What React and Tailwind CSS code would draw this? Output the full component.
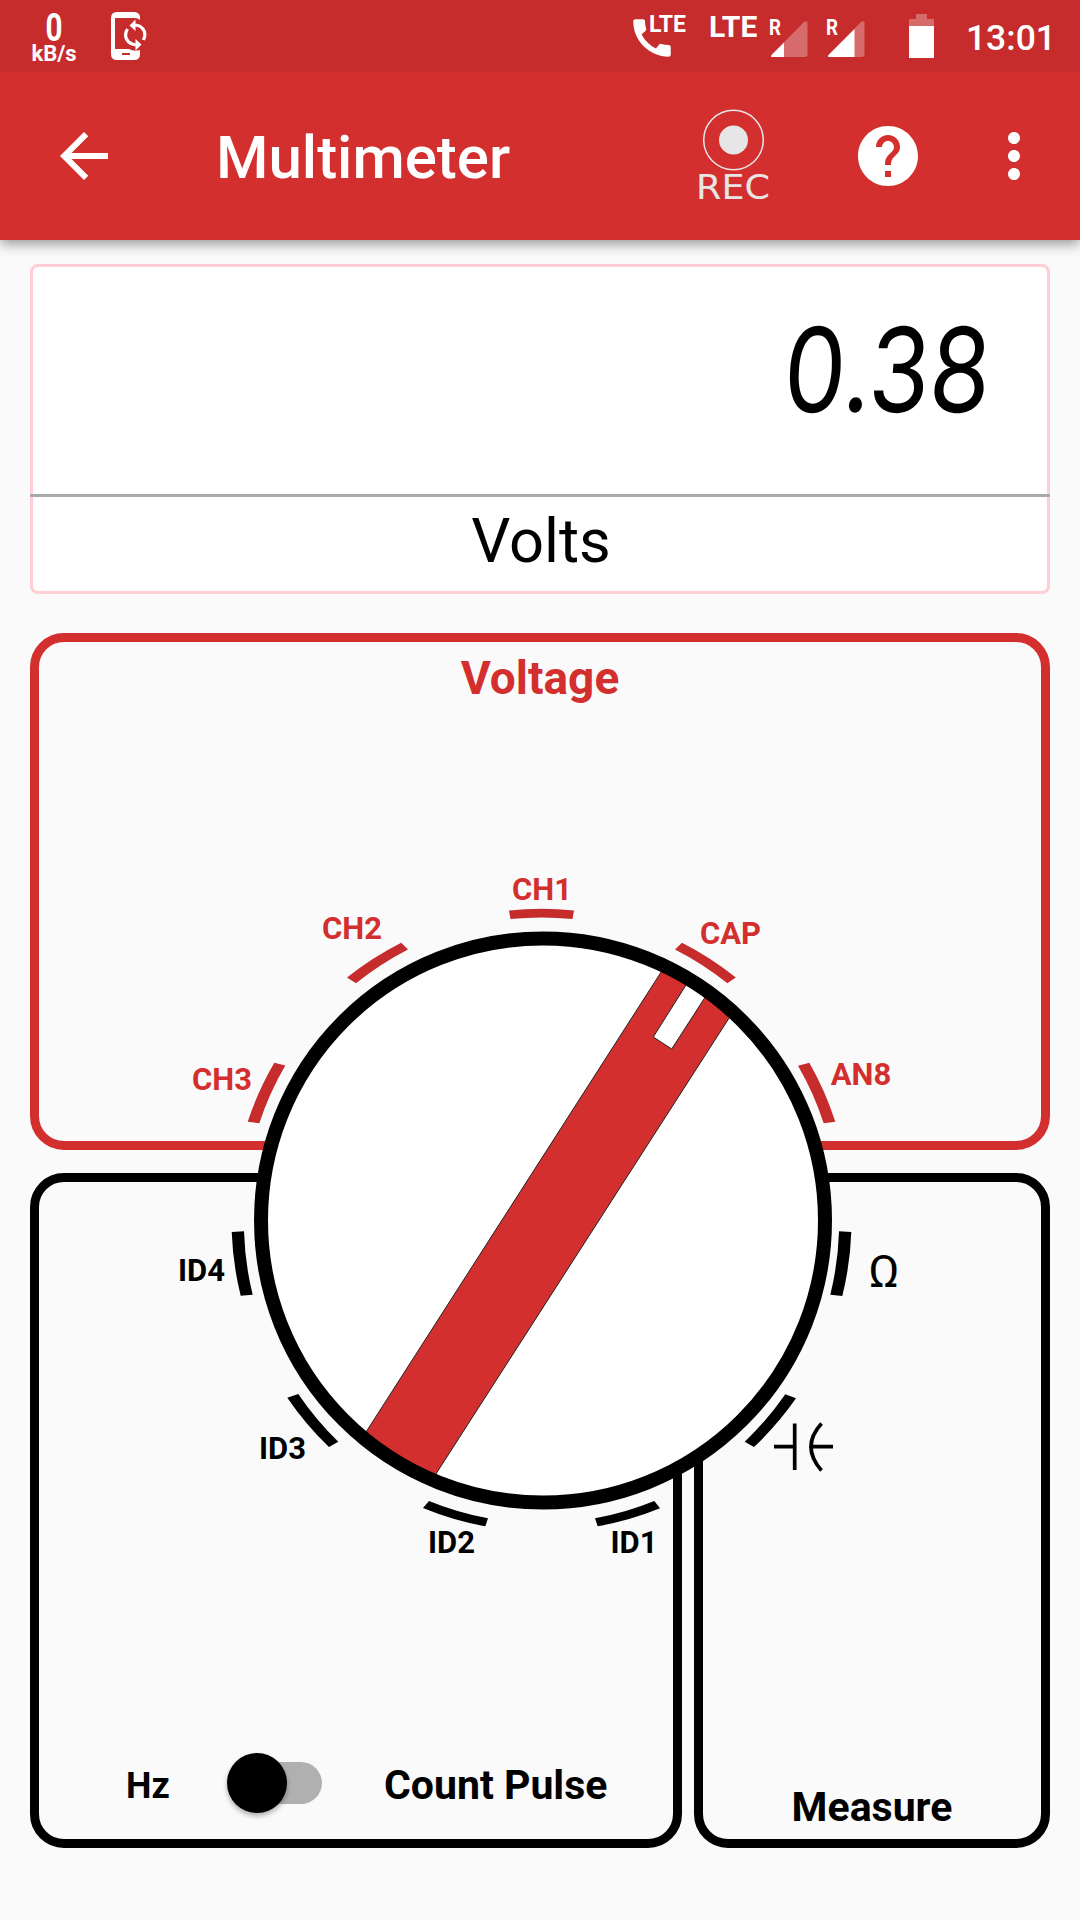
import { MdArrowBack, MdCall, MdHelp, MdMoreVert } from "react-icons/md";

const RED = "#d32f2f";

function PhoneSync() {
  return (
    <svg className="ml-[36px] mt-[12px] h-[48px] w-[36px]" viewBox="0 0 36 48" fill="none">
      <path d="M6 0H24Q29 1 29 5V8Q27 6 24 6H4V37H18Q23 40 29 38V42Q29 48 23 48H6Q0 48 0 42V6Q0 0 6 0Z" fill="#fff" />
      <path d="M11 42H19" stroke="#c62c2c" strokeWidth="2" />
      <path d="M23 13C31 13 35 19 33.500 25L32.500 28M16.500 17C12 24 16 32 25 33" stroke="#fff" strokeWidth="3.200" />
      <path d="M24.500 7.500V19L18.500 13.500ZM24.500 27V38.500L30.500 32.500Z" fill="#fff" />
    </svg>
  );
}

function Signal({ fill, className }) {
  return (
    <div className={className}>
      <svg className="h-[44px] w-[42px]" viewBox="0 0 42 44">
        <path d="M3 41Q1 41 3 38.500L35 6Q38.500 4 38.500 7V38Q38.500 41 36 41Z" fill="#fff" fillOpacity=".3" />
        <path d={`M3 41Q1 41 3 38.500L${fill} ${41 - fill + 0.5}V41Z`} fill="#fff" />
        <text x="0" y="19" fontSize="22" fontWeight="700" fill="#fff" textLength="12" lengthAdjust="spacingAndGlyphs">R</text>
      </svg>
    </div>
  );
}

function StatusBar() {
  return (
    <div className="relative z-10 flex h-[72px] bg-[#c62c2c] text-white">
      <div className="ml-[33px] flex w-[42px] flex-col items-center pt-[10px]">
        <span className="scale-x-[.78] text-[38px] font-bold leading-[36px]">0</span>
        <span className="text-[22px] font-bold leading-[16px]">kB/s</span>
      </div>
      <PhoneSync />
      <div className="ml-auto mr-[24px] flex">
        <div className="relative w-[82px]">
          <MdCall className="mt-[13px] size-[50px]" />
          <span className="absolute left-[22px] top-[12px] text-[23px] font-bold leading-[26px]">LTE</span>
        </div>
        <span className="mt-[9px] w-[60px] text-[30px] font-bold leading-[35px]">LTE</span>
        <Signal fill={15} className="mt-[16px] w-[57px]" />
        <Signal fill={28.500} className="mt-[16px] w-[83px]" />
        <svg className="mt-[14px] h-[44px] w-[25px]" viewBox="0 0 25 44" fill="#fff">
          <path d="M7 0H18V5H25V12H0V5H7Z" fillOpacity=".3" />
          <path d="M0 12H25V44H0Z" />
        </svg>
        <span className="ml-[32px] mt-[17px] text-[35.500px] font-medium leading-[42px]">13:01</span>
      </div>
    </div>
  );
}

function AppBar() {
  return (
    <header className="relative flex h-[168px] items-center bg-[#d32f2f] pr-[30px] text-white shadow-[0_4px_12px_rgba(0,0,0,0.4)]">
      <MdArrowBack className="ml-[48px] size-[72px]" />
      <h1 className="ml-[96px] mt-[4px] text-[60px] font-medium leading-[70px]">Multimeter</h1>
      <div className="ml-auto mr-[78px] flex h-[108px] w-[80px] flex-col items-center text-[#e6e6e6]">
        <svg className="mt-[7px] size-[62px] shrink-0" viewBox="0 0 62 62">
          <circle cx="30.500" cy="31" r="29.800" fill="none" stroke="currentColor" strokeWidth="1.500" />
          <circle cx="30.500" cy="31" r="14.500" fill="currentColor" />
        </svg>
        <svg className="h-[39px] w-[80px] shrink-0" viewBox="0 0 80 39">
          <text x="2" y="28" fontSize="33" textLength="74" lengthAdjust="spacingAndGlyphs" fill="currentColor" fontFamily="DejaVu Sans, sans-serif">REC</text>
        </svg>
      </div>
      <MdHelp className="mr-[54px] size-[72px]" />
      <MdMoreVert className="size-[72px]" />
    </header>
  );
}

function Readout() {
  return (
    <section className="mx-[30px] mt-[24px] flex h-[330px] flex-col rounded-[8px] border-[3px] border-[#ffcdd2] bg-white text-black">
      <div className="flex h-[227px] justify-end pr-[58px] pt-[32px]">
        <span className="origin-right -skew-x-[5deg] scale-x-[.84] font-[Inter] text-[117px] leading-[142px]">0.38</span>
      </div>
      <div className="-mx-[3px] h-[3px] shrink-0 bg-[#a9a9a9]" />
      <div className="flex h-[88px] items-center justify-center pl-[2px] text-[61.500px] leading-[70px]">Volts</div>
    </section>
  );
}

const ticks = [
  [RED, 509, 910.5, 574, 910.5, 572.5, 919, 510.5, 919],
  [RED, 347, 977.5, 401.3, 942.7, 408, 949.4, 356, 983.3],
  [RED, 682, 942.7, 735.8, 977.5, 727.4, 983.3, 675, 949.4],
  [RED, 247.7, 1121.7, 274.3, 1062.7, 285.3, 1065.5, 259.3, 1123.3],
  [RED, 809.3, 1062.7, 835.3, 1121.7, 823.7, 1123.3, 798, 1065.7],
  ["#000", 240.7, 1295.7, 231.7, 1232, 244, 1231.3, 252.7, 1294.7],
  ["#000", 851.3, 1232, 842.3, 1296, 830.3, 1294.7, 839, 1231.3],
  ["#000", 329, 1447, 287.3, 1397.7, 298.3, 1394, 338.3, 1441.7],
  ["#000", 796, 1398.3, 754, 1447, 744.7, 1441.7, 785.3, 1394.2],
  ["#000", 485.3, 1526.3, 423, 1508, 429, 1501, 488, 1518.3],
  ["#000", 660, 1508.3, 597.7, 1526.3, 595, 1518.3, 654.3, 1501],
];

const labels = [
  ["CH1", 542, 900, RED],
  ["CH2", 352, 939, RED],
  ["CH3", 222, 1090, RED],
  ["CAP", 730.5, 943.5, RED],
  ["AN8", 861, 1085, RED],
  ["ID4", 201.5, 1281, "#000"],
  ["ID3", 282.5, 1459, "#000"],
  ["ID2", 451.5, 1553, "#000"],
  ["ID1", 634, 1553, "#000"],
];

function Dial() {
  return (
    <svg className="absolute left-0 top-0 h-[960px] w-[1080px]" viewBox="0 633 1080 960">
      <clipPath id="dial-face">
        <circle cx="543" cy="1220.500" r="280" />
      </clipPath>
      <circle cx="543" cy="1220.500" r="282" fill="#fff" />
      <g clipPath="url(#dial-face)">
        <g fill={RED} stroke="#222" strokeWidth="1">
          <path d="M686.500 932.500L754.500 978.500L410.200 1514L341 1471Z" />
          <path d="M717.500 935L653.300 1037L671.700 1049L737.500 947Z" fill="#fff" />
        </g>
      </g>
      <circle cx="543" cy="1220.500" r="282" fill="none" stroke="#000" strokeWidth="14" />
      {ticks.map(([color, ax, ay, bx, by, cx, cy, dx, dy]) => (
        <path
          key={`${ax}-${ay}`}
          d={`M${ax} ${ay}A310 310 0 0 1 ${bx} ${by}L${cx} ${cy}A298 298 0 0 0 ${dx} ${dy}Z`}
          fill={color === RED ? "#c62c2c" : color}
        />
      ))}
      {labels.map(([text, x, y, color]) => (
        <text key={text} x={x} y={y} textAnchor="middle" fontSize="31" fontWeight="700" fill={color}>
          {text}
        </text>
      ))}
      <text x="868.500" y="1287" fontSize="45" textLength="31" lengthAdjust="spacingAndGlyphs" fontFamily="Roboto, sans-serif">Ω</text>
      <path d="M774 1446.700H794.500M811 1446.700H833M794.700 1423.500V1470M821.500 1423.500Q800.500 1446.700 821.500 1470.500" fill="none" stroke="#000" strokeWidth="3.700" />
    </svg>
  );
}

export default function App() {
  return (
    <div className="flex h-[1920px] w-[1080px] flex-col overflow-hidden bg-[#fafafa] font-[Roboto,sans-serif]">
      <StatusBar />
      <AppBar />
      <Readout />
      <main className="relative mt-[39px] flex flex-col gap-[23px] px-[30px]">
        <section className="flex h-[517px] justify-center rounded-[34px] border-[9px] border-[#d32f2f] pt-[9px]">
          <h2 className="text-[46px] font-bold leading-[54px] text-[#d32f2f]">Voltage</h2>
        </section>
        <div className="flex h-[675px] gap-[12px]">
          <section className="flex w-[652px] items-end rounded-[34px] border-[9px] border-black pb-[26px]">
            <span className="ml-[87px] w-[101px] translate-y-[3px] text-[36px] font-bold leading-[60px]">Hz</span>
            <div className="flex h-[60px] w-[96px] items-center">
              <div className="ml-[12px] flex h-[42px] w-[83px] items-center rounded-full bg-[#b0b0b0]">
                <div className="-ml-[12px] size-[60px] shrink-0 rounded-full bg-black shadow-[0_3px_5px_rgba(0,0,0,0.3)]" />
              </div>
            </div>
            <span className="ml-[61px] translate-y-[2px] text-[41px] font-bold leading-[60px]">Count Pulse</span>
          </section>
          <section className="flex flex-1 items-end justify-center rounded-[34px] border-[9px] border-black pb-[8px]">
            <span className="text-[41px] font-bold leading-[48px]">Measure</span>
          </section>
        </div>
        <Dial />
      </main>
    </div>
  );
}
